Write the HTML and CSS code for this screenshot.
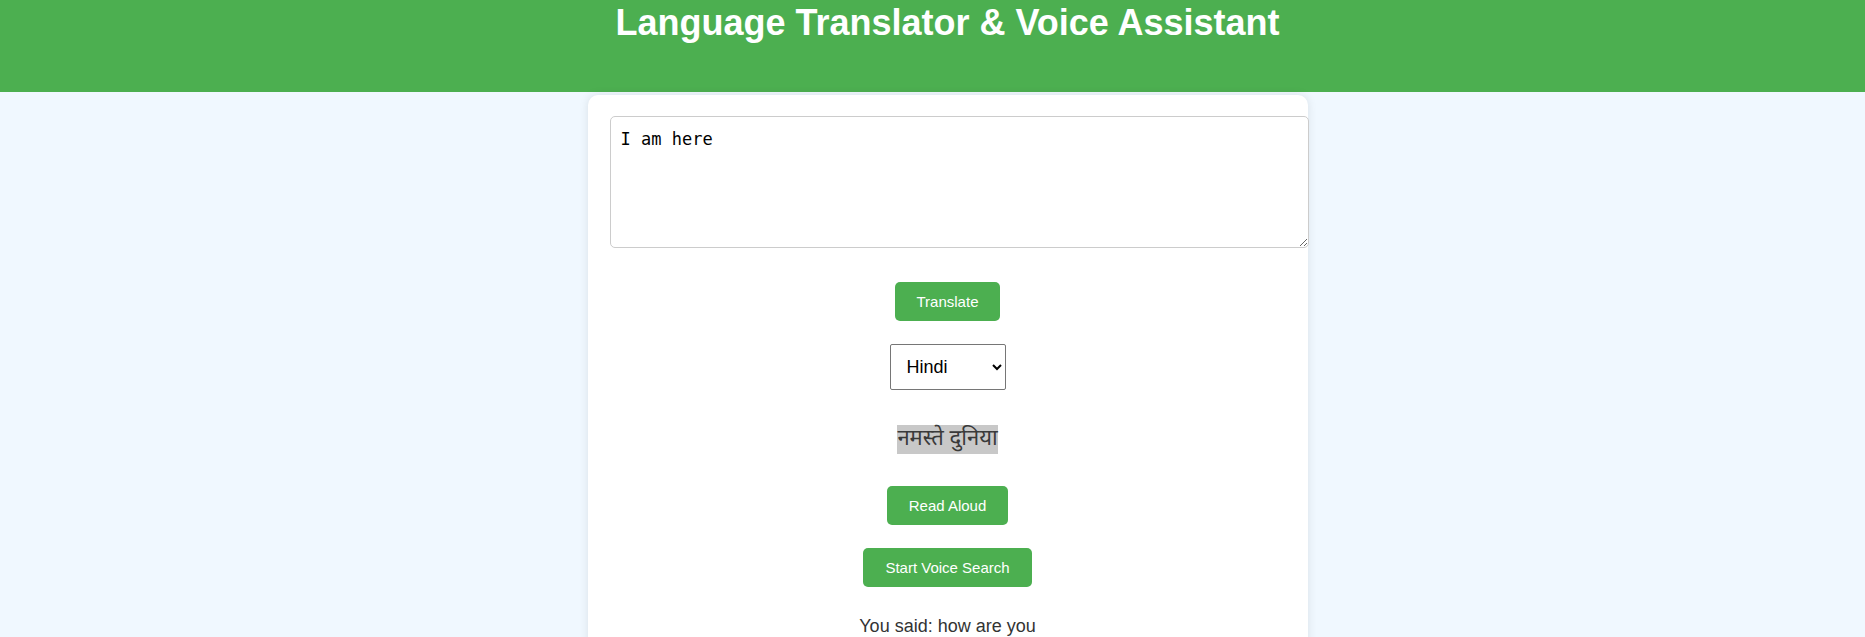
FILE: index.html
```html
<!DOCTYPE html>
<html lang="en">
<head>
<meta charset="utf-8">
<title>Language Translator &amp; Voice Assistant</title>
<link rel="stylesheet" href="styles.css">
</head>
<body>
<header class="site-header">
  <h1 class="title">Language Translator &amp; Voice Assistant</h1>
</header>
<main class="page">
  <section class="card">
    <textarea class="input-text">I am here</textarea>
    <button class="btn btn-translate">Translate</button>
    <select class="lang-select">
      <option>Hindi</option>
      <option>Spanish</option>
      <option>French</option>
      <option>German</option>
    </select>
    <p class="output"><span class="output-text">नमस्ते दुनिया</span></p>
    <button class="btn btn-read">Read Aloud</button>
    <button class="btn btn-voice">Start Voice Search</button>
    <p class="heard">You said: how are you</p>
  </section>
</main>
</body>
</html>
```
FILE: styles.css
```css
html, body {
  margin: 0;
  padding: 0;
}
body {
  background: #f0f8ff;
  font-family: "Liberation Sans", Arial, sans-serif;
  color: #333;
  height: 637px;
  overflow: hidden;
}
.site-header {
  background: #4caf50;
  height: 92px;
  box-sizing: border-box;
  padding: 3px 0 0 30px;
}
.title {
  margin: 0;
  color: #fff;
  font-size: 36px;
  font-weight: bold;
  text-align: center;
  line-height: 40px;
}
.page {
  padding-left: 30px;
  display: flex;
  justify-content: center;
}
.card {
  margin-top: 3px;
  width: 720px;
  box-sizing: border-box;
  padding: 21px 22px 20px;
  background: #fff;
  border-radius: 10px;
  box-shadow: 0 0 10px rgba(0, 0, 0, 0.1);
  display: flex;
  flex-direction: column;
  align-items: center;
}
.input-text {
  align-self: flex-start;
  box-sizing: border-box;
  width: 699px;
  height: 132px;
  padding: 10px;
  border: 1px solid #ccc;
  border-radius: 5px;
  font-family: "DejaVu Sans Mono", "Liberation Mono", monospace;
  font-size: 17px;
  line-height: 24px;
  color: #000;
  background: #fff;
  margin: 0;
}
.btn {
  background: #4caf50;
  color: #fff;
  border: none;
  border-radius: 5px;
  padding: 11px 22px;
  font-family: "Liberation Sans", Arial, sans-serif;
  font-size: 15px;
  line-height: 17px;
  cursor: pointer;
}
.btn-translate {
  margin-top: 34px;
}
.lang-select {
  margin-top: 23px;
  width: 116px;
  height: 46px;
  box-sizing: border-box;
  padding: 0 10px 0 12px;
  font-family: "Liberation Sans", Arial, sans-serif;
  font-size: 18px;
  color: #000;
  background: #fff;
  border: 1px solid #767676;
  border-radius: 2px;
}
.output {
  margin: 34px 0 0;
  line-height: 27px;
  font-size: 22px;
}
.output-text {
  background: #c8c8c8;
  color: #3a3a3a;
  font-family: "Nirmala UI", "Noto Sans Devanagari", "Lohit Devanagari", "Noto Sans", sans-serif;
}
.btn-read {
  margin-top: 33px;
}
.btn-voice {
  margin-top: 23px;
}
.heard {
  margin: 29px 0 0;
  font-size: 18px;
  line-height: 21px;
  color: #333;
}
```
